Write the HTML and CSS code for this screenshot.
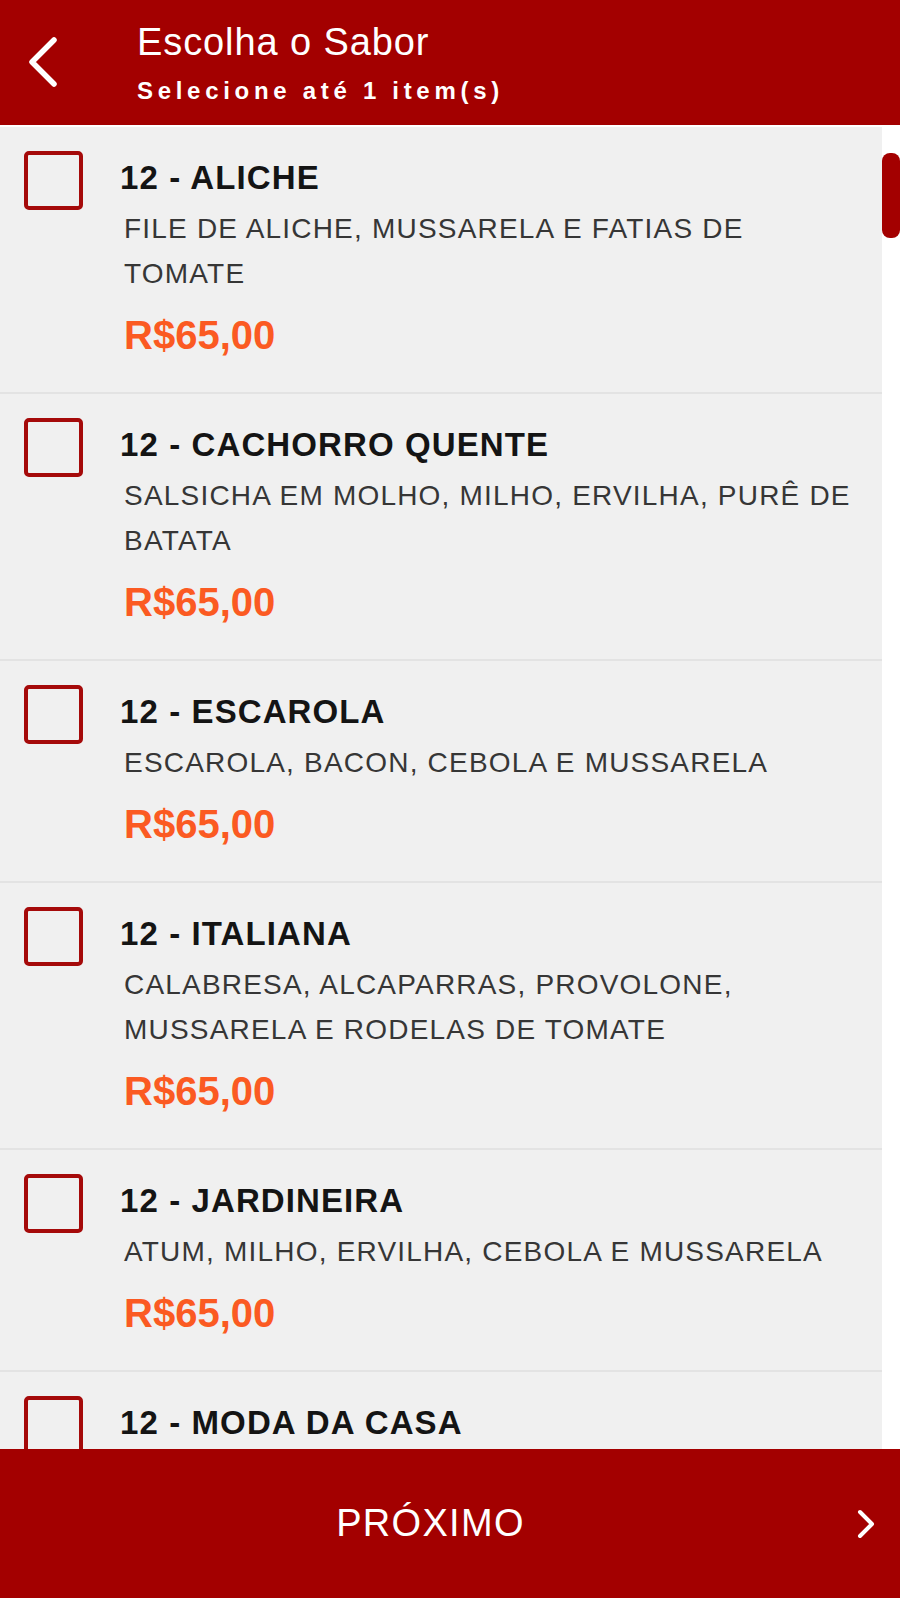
FILE: index.html
```
<!DOCTYPE html>
<html lang=pt-BR>
<head>
  <meta charset=utf-8>
  <title>Escolha o Sabor</title>
  <meta name=viewport content='width=device-width, initial-scale=1.0'>
  <link rel="stylesheet" href="styles.css">
</head>
<body>
  <header class=top>
    <a class=back href="#">
      <svg width="32" height="52" viewBox="0 0 32 52"><polyline points="27,4 5,26 27,48" fill="none" stroke="#fff" stroke-width="5.5" stroke-linecap="round" stroke-linejoin="round"/></svg>
    </a>
    <div class=heading>
      <h1>Escolha o Sabor</h1>
      <p>Selecione até 1 item(s)</p>
    </div>
  </header>

  <main class=list>
    <ul class=items>
      <li class=item>
        <span class=box></span>
        <div class=info>
          <h2>12 - ALICHE</h2>
          <p class=desc>FILE DE ALICHE, MUSSARELA E FATIAS DE TOMATE</p>
          <p class=price>R$65,00</p>
        </div>
      <li class=item>
        <span class=box></span>
        <div class=info>
          <h2>12 - CACHORRO QUENTE</h2>
          <p class=desc>SALSICHA EM MOLHO, MILHO, ERVILHA, PURÊ DE BATATA</p>
          <p class=price>R$65,00</p>
        </div>
      <li class=item>
        <span class=box></span>
        <div class=info>
          <h2>12 - ESCAROLA</h2>
          <p class=desc>ESCAROLA, BACON, CEBOLA E MUSSARELA</p>
          <p class=price>R$65,00</p>
        </div>
      <li class=item>
        <span class=box></span>
        <div class=info>
          <h2>12 - ITALIANA</h2>
          <p class=desc>CALABRESA, ALCAPARRAS, PROVOLONE, MUSSARELA E RODELAS DE TOMATE</p>
          <p class=price>R$65,00</p>
        </div>
      <li class=item>
        <span class=box></span>
        <div class=info>
          <h2>12 - JARDINEIRA</h2>
          <p class=desc>ATUM, MILHO, ERVILHA, CEBOLA E MUSSARELA</p>
          <p class=price>R$65,00</p>
        </div>
      <li class=item>
        <span class=box></span>
        <div class=info>
          <h2>12 - MODA DA CASA</h2>
        </div>
    </ul>
    <div class=track><span class=thumb></span></div>
  </main>

  <footer class=next>
    <span class=label>PRÓXIMO</span>
    <svg width="24" height="32" viewBox="0 0 24 32"><polyline points="5,4 17,16 5,28" fill="none" stroke="#fff" stroke-width="4" stroke-linecap="round" stroke-linejoin="round"/></svg>
  </footer>
</body>
</html>
```

FILE: styles.css
```
/* page frame: header, scrolling list, footer button */

html, body {
  height: 100%;
}

body {
  margin: 0;
  display: flex;
  flex-direction: column;
  background: #fff;
  font-family: "Liberation Sans", Arial, sans-serif;
  overflow: hidden;
}

.top {
  flex: none;
  height: 125px;
  box-sizing: border-box;
  display: flex;
  background: #a30000;
  color: #fff;
}

.back {
  width: 137px;
  display: flex;
  padding: 36px 0 0 27px;
  box-sizing: border-box;
}

.heading {
  padding-top: 20px;
}

.heading h1 {
  margin: 0;
  font-size: 38px;
  font-weight: normal;
  line-height: 44px;
  letter-spacing: 0.9px;
}

.heading p {
  margin: 13px 0 0 0;
  font-size: 24px;
  font-weight: bold;
  line-height: 28px;
  letter-spacing: 4.7px;
}

/* list */

.list {
  flex: 1;
  min-height: 0;
  display: flex;
  padding-top: 2px;
  overflow: hidden;
}

.items {
  width: 882px;
  margin: 0;
  padding: 0;
  list-style: none;
}

.item {
  display: flex;
  align-items: flex-start;
  padding: 24px 20px 34px 24px;
  background: #f0f0f0;
  border-bottom: 2px solid #e3e3e3;
}

.box {
  flex: none;
  width: 59px;
  height: 59px;
  box-sizing: border-box;
  border: 4px solid #a50a0a;
  border-radius: 5px;
}

.info {
  flex: 1;
  margin-left: 37px;
}

.info h2 {
  margin: 8px 0 0;
  font-size: 33px;
  line-height: 38px;
  letter-spacing: 1.1px;
  color: #141414;
}

.desc {
  margin: 9px 0 0 4px;
  font-size: 28px;
  line-height: 45px;
  letter-spacing: 1.2px;
  color: #363636;
}

.price {
  margin: 16px 0 0 4px;
  font-size: 40px;
  font-weight: bold;
  line-height: 46px;
  color: #fb5a22;
}

/* fake scrollbar */

.track {
  flex: 1;
  padding-top: 26px;
}

.thumb {
  display: block;
  height: 85px;
  background: #a30000;
  border-radius: 8px;
}

/* footer button */

.next {
  flex: none;
  height: 149px;
  display: flex;
  align-items: center;
  background: #a30000;
  color: #fff;
}

.label {
  flex: 1;
  text-align: center;
  padding-left: 40px;
  font-size: 38px;
  letter-spacing: 1.3px;
}

.next svg {
  margin: 0 21px 0 34px;
}
```
